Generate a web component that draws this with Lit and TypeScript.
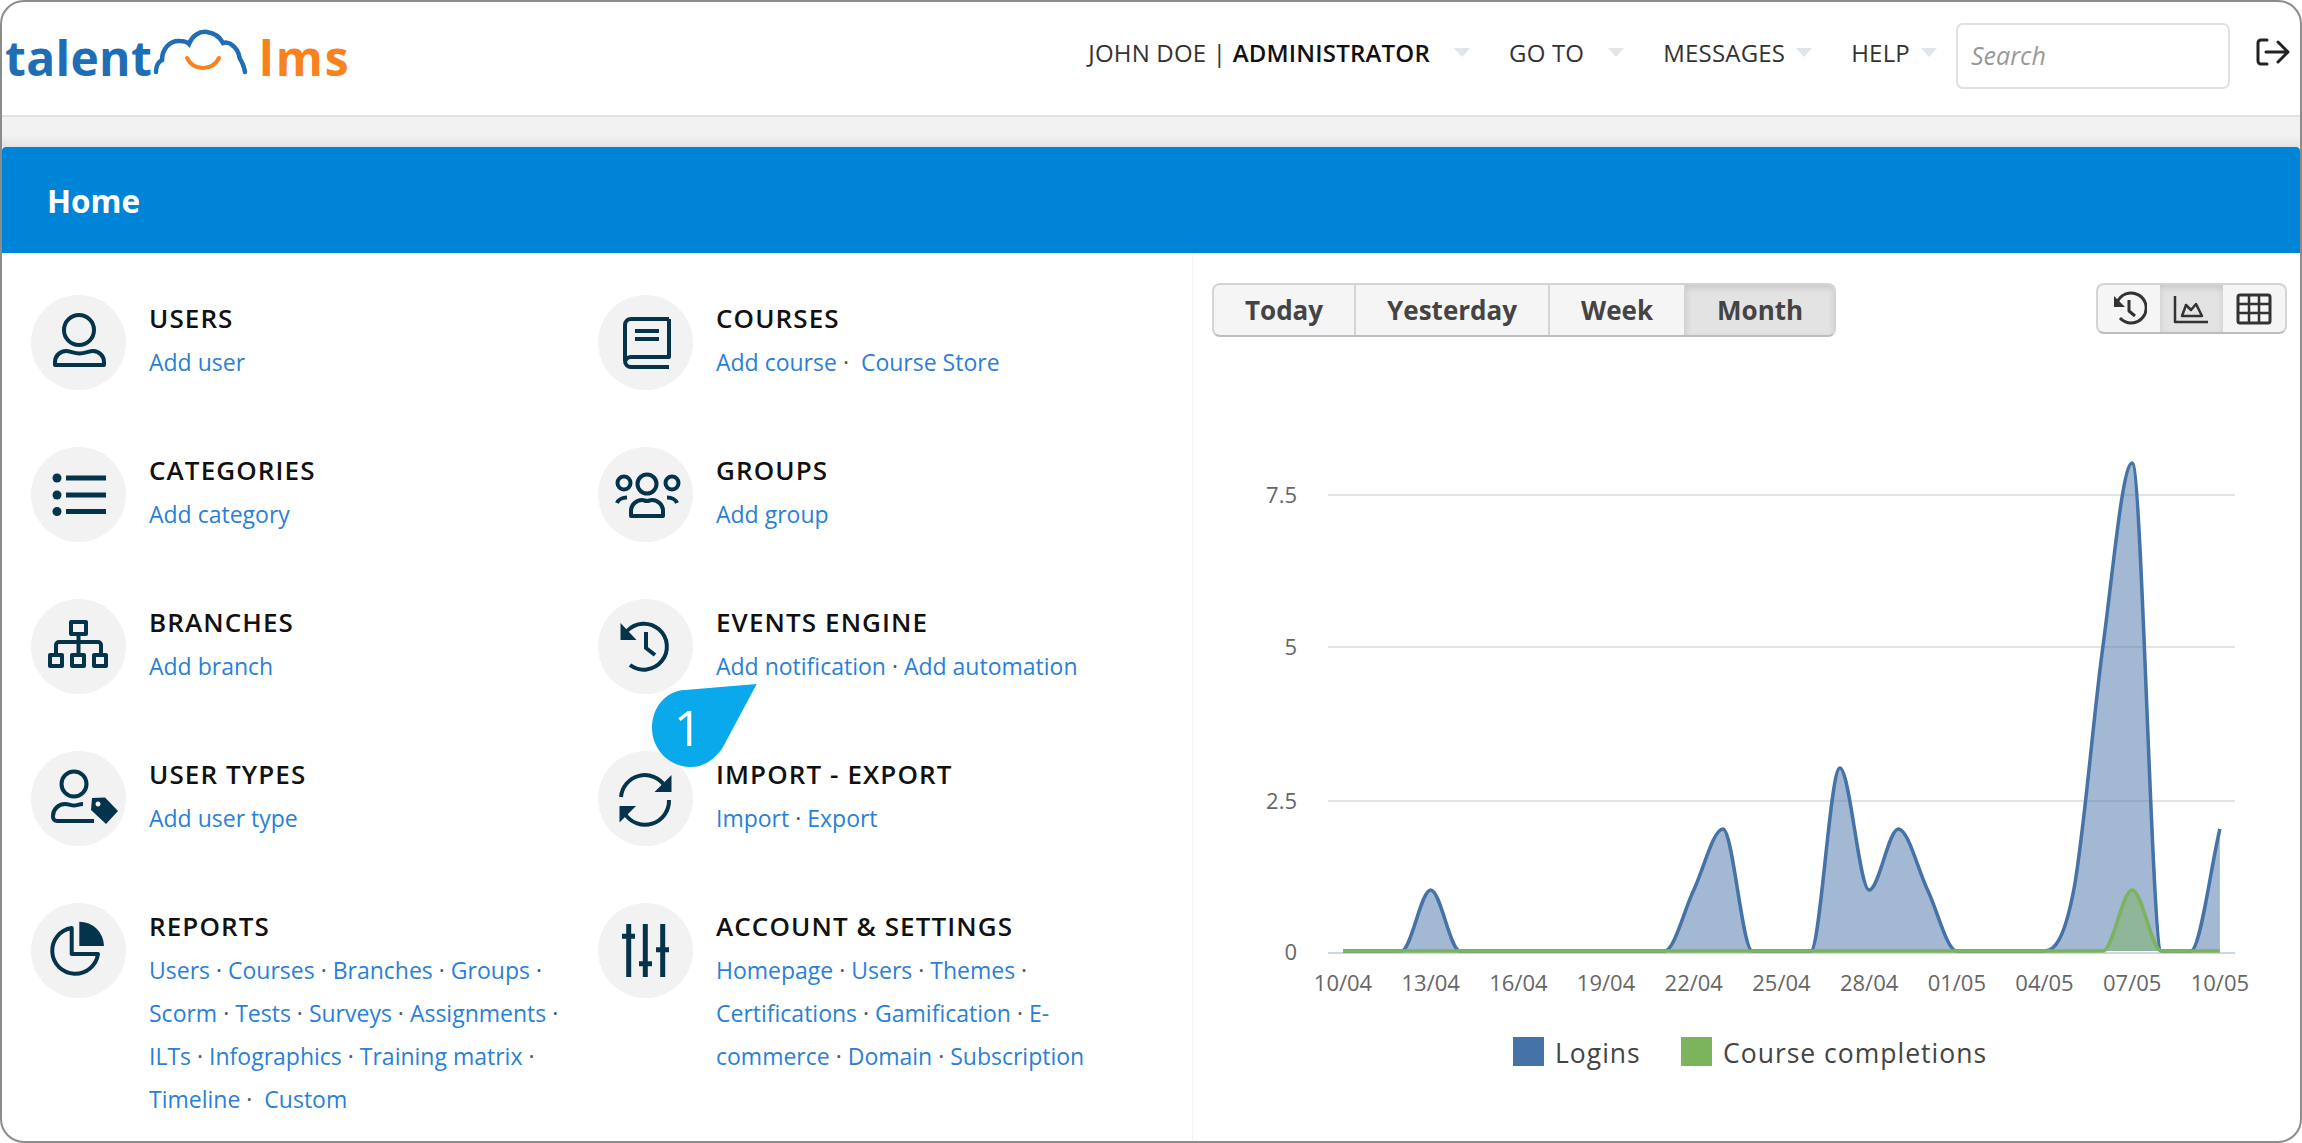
import { LitElement, css, html, svg, nothing } from "lit";
import { customElement } from "lit/decorators.js";
import { classMap } from "lit/directives/class-map.js";

const ICONS: Record<string, unknown> = {
	user: svg`<circle cx="48" cy="35" r="15"/><path d="M24 70v-3a11 11 0 0 1 11-11c4 0 8 2.5 13.5 2.5s9.500-2.500 13.500-2.500a11 11 0 0 1 11 11v3z"/>`,
	list: svg`<g class="fill"><circle cx="26" cy="31" r="4.500"/><circle cx="26" cy="48" r="4.500"/><circle cx="26" cy="64.500" r="4.500"/></g><path class="thick" d="M35 31h40M35 48h40M35 64.500h40"/>`,
	branch: svg`<rect x="40" y="23" width="15" height="12"/><path d="M47.500 35v20M25 54v-8a3 3 0 0 1 3-3h39a3 3 0 0 1 3 3v8"/><rect x="19" y="56" width="12" height="11"/><rect x="41" y="56" width="12" height="11"/><rect x="63" y="56" width="12" height="11"/>`,
	book: svg`<path d="M71 24H33a6 6 0 0 0-6 6v36a6 6 0 0 0 6 6h38M71 24v38H33a6 6 0 0 0-6 5M37 36h24M37 44h24"/>`,
	group: svg`<circle cx="49" cy="37" r="9.500"/><circle cx="26" cy="36" r="6.500"/><circle cx="74" cy="36" r="6.500"/><path d="M33 69v-5a11 11 0 0 1 11-11c2 0 3 1 5 1s3-1 5-1a11 11 0 0 1 11 11v5zM19 56c1-3 5-5.500 10-5.500M79 56c-1-3-5-5.500-10-5.500"/>`,
	history: svg`<path d="M29 32a23 23 0 1 1 3 34M48 33v16l9 7"/><path class="fill" d="M22.500 24v17h16z"/>`,
	usertag: svg`<circle cx="43" cy="33" r="12.500"/><path d="M63 70H26a4 4 0 0 1-4-4v-1a12 12 0 0 1 12-12c4 0 6 1.500 9 1.500s5-1.500 9-1.500"/><path class="fill" fill-rule="evenodd" d="M61 47l13-.500 13 13.500-12 13-15-14zM67 50.500a2.500 2.500 0 1 0 .01 0z"/>`,
	sync: svg`<path d="M23 46a24 24 0 0 1 44-11M71 49a24 24 0 0 1-44 14"/><path class="fill" d="M73.500 24v17H56.500zM21.500 55H38L21.500 71.500z"/>`,
	pie: svg`<path d="M40.700 25A23 23 0 1 0 67 51H40.700z"/><path class="fill" d="M48.300 18.700A24.500 24.500 0 0 1 73 43H48.300z"/>`,
	sliders: svg`<path class="thick" d="M30.700 21v53M47.300 21v53M64.700 21v53M24 33.300h13M41 60.700h13M58 46.700h13"/>`,
};

const SECTIONS = [
	{ icon: "user", title: "USERS", links: ["Add user"] },
	{ icon: "book", title: "COURSES", links: ["Add course", "Course Store"] },
	{ icon: "list", title: "CATEGORIES", links: ["Add category"] },
	{ icon: "group", title: "GROUPS", links: ["Add group"] },
	{ icon: "branch", title: "BRANCHES", links: ["Add branch"] },
	{ icon: "history", title: "EVENTS ENGINE", links: ["Add notification", "Add automation"] },
	{ icon: "usertag", title: "USER TYPES", links: ["Add user type"] },
	{ icon: "sync", title: "IMPORT - EXPORT", links: ["Import", "Export"] },
	{
		icon: "pie",
		title: "REPORTS",
		links: ["Users", "Courses", "Branches", "Groups", "Scorm", "Tests", "Surveys", "Assignments", "ILTs", "Infographics", "Training matrix", "Timeline", "Custom"],
	},
	{
		icon: "sliders",
		title: "ACCOUNT & SETTINGS",
		links: ["Homepage", "Users", "Themes", "Certifications", "Gamification", "E-commerce", "Domain", "Subscription"],
	},
];

// these two sit a little further from their separator
const WIDE_GAP = ["Course Store", "Custom"];

const RANGES = ["Today", "Yesterday", "Week", "Month"];

const LOGINS = [0, 0, 0, 1, 0, 0, 0, 0, 0, 0, 0, 0, 1, 2, 0, 0, 0, 3, 1, 2, 1, 0, 0, 0, 0, 1, 5, 8, 0, 0, 2];
const COMPLETIONS = LOGINS.map((_, i) => (i === 27 ? 1 : 0));
const TICKS = ["10/04", "13/04", "16/04", "19/04", "22/04", "25/04", "28/04", "01/05", "04/05", "07/05", "10/05"];

const X0 = 1343;
const DX = 29.23;
const Y0 = 951;
const UNIT = 61;

// flat at turning points, averaged slope elsewhere, so the curve never dips under zero
function curve(values: number[]): string {
	const px = (i: number) => X0 + i * DX;
	const py = (v: number) => Y0 - v * UNIT;
	const slopes = values.slice(1).map((v, i) => v - values[i]);
	const tan = values.map((_, i) => {
		const a = slopes[i - 1] ?? slopes[i];
		const b = slopes[i] ?? slopes[i - 1];
		return a * b <= 0 ? 0 : (a + b) / 2;
	});
	let d = `M${px(0)} ${py(values[0])}`;
	for (let i = 0; i < values.length - 1; i++) {
		const c1 = py(values[i]) - (tan[i] * UNIT) / 3;
		const c2 = py(values[i + 1]) + (tan[i + 1] * UNIT) / 3;
		d += `C${px(i) + DX / 3} ${c1} ${px(i + 1) - DX / 3} ${c2} ${px(i + 1)} ${py(values[i + 1])}`;
	}
	return d;
}

@customElement("app-root")
export class AppRoot extends LitElement {
	static override styles = css`
		:host {
			display: block;
			font-family: "Open Sans", sans-serif;
		}

		.frame {
			position: relative;
			box-sizing: border-box;
			width: 2302px;
			height: 1143px;
			border: 2px solid #8c8c8c;
			border-radius: 24px;
			overflow: hidden;
			background: #fff;
		}

		.topbar {
			box-sizing: border-box;
			height: 115px;
			display: flex;
			align-items: center;
			padding: 0 10px 5px 3px;
			border-bottom: 2px solid #dde3e6;
		}

		.logo {
			display: flex;
			align-items: baseline;
			margin-right: auto;
			font-size: 48px;
			font-weight: 700;
			letter-spacing: 0.3px;
			line-height: 60px;
			color: #1f6db5;
		}

		.logo svg {
			width: 108px;
			height: 52px;
			margin: 0 0 -4px -1px;
		}

		.logo .lms {
			letter-spacing: 2px;
			color: #f7821e;
		}

		.nav {
			display: flex;
			align-items: center;
			font-size: 24px;
			letter-spacing: 0.2px;
			color: #333;
			margin: 0 0 8px;
		}

		.nav strong {
			font-weight: 600;
			color: #111;
		}

		.nav-item {
			display: flex;
			align-items: center;
			margin-right: 39px;
			white-space: pre;
		}

		.nav-item:last-child {
			margin-right: 19px;
		}

		.caret {
			width: 0;
			height: 0;
			margin-left: 24px;
			border: solid transparent;
			border-width: 9px 8px 0;
			border-top-color: #dfe5e8;
		}

		.tight .caret {
			margin-left: 11px;
		}

		.search {
			box-sizing: border-box;
			width: 274px;
			height: 66px;
			padding: 0 13px 3px;
			border: 2px solid #dde3e6;
			border-radius: 7px;
			font: italic 25px "Open Sans", sans-serif;
			outline: none;
		}

		.search::placeholder {
			color: #999;
		}

		.logout {
			width: 36px;
			height: 30px;
			margin: 0 0 0 24px;
			fill: none;
			stroke: #222;
			stroke-width: 3;
			stroke-linecap: round;
			stroke-linejoin: round;
			transform: translateY(-4px);
		}

		.band {
			height: 30px;
			background: linear-gradient(#f2f2f2 60%, #e3e3e3);
		}

		.title-bar {
			box-sizing: border-box;
			height: 106px;
			padding-left: 45px;
			display: flex;
			align-items: center;
			background: #0084d8;
			border-radius: 4px 4px 0 0;
			font-size: 31.5px;
			font-weight: 700;
			color: #fff;
		}

		.content {
			display: flex;
		}

		.menu {
			box-sizing: border-box;
			width: 1191px;
			height: 888px;
			padding: 42px 0 0 29px;
			border-right: 1px solid #f3f3f3;
			display: grid;
			grid-template-columns: 567px 1fr;
			grid-auto-rows: 152px;
		}

		.section {
			display: flex;
			align-items: flex-start;
			gap: 23px;
		}

		.disc {
			flex: none;
			width: 95px;
			height: 95px;
			border-radius: 50%;
			background: #f2f2f2;
		}

		.disc svg {
			display: block;
			width: 95px;
			height: 95px;
			fill: none;
			stroke: #04334c;
			stroke-width: 4;
			stroke-linejoin: round;
		}

		.disc .fill {
			fill: #04334c;
			stroke: none;
		}

		.disc .thick {
			stroke-width: 5;
		}

		.text {
			width: 425px;
			margin-top: 2px;
			line-height: 43px;
		}

		.title {
			font-size: 26px;
			font-weight: 600;
			letter-spacing: 1.1px;
			color: #111;
		}

		.links {
			margin-top: 1px;
			font-size: 23px;
			color: #556;
		}

		.links a {
			color: #2b7fd6;
		}

		.links a.wide {
			margin-left: 6px;
		}

		.panel {
			flex: 1;
			min-width: 0;
		}

		.tools {
			display: flex;
			justify-content: space-between;
			align-items: flex-start;
			padding: 30px 13px 0 19px;
		}

		.btn-group {
			display: flex;
			border: 2px solid #d4d4d4;
			border-bottom-color: #bdbdbd;
			border-radius: 8px;
			overflow: hidden;
			background: #f5f5f5;
		}

		.range {
			height: 50px;
			padding: 0 31px;
			display: flex;
			align-items: center;
			border-left: 2px solid #d4d4d4;
			font-size: 26px;
			font-weight: 700;
			color: #444;
		}

		.range:first-child,
		.view:first-child {
			border-left: none;
		}

		.active {
			background: #e3e3e3;
			box-shadow: inset 0 3px 6px rgba(0, 0, 0, 0.12);
		}

		.view {
			box-sizing: border-box;
			width: 62.5px;
			height: 47px;
			display: flex;
			align-items: center;
			justify-content: center;
		}

		.view svg {
			width: 36px;
			height: 36px;
			fill: none;
			stroke: #333;
			stroke-width: 3;
			stroke-linejoin: round;
		}

		.view .solid {
			fill: #333;
			stroke: none;
		}

		.chart {
			display: block;
			width: 1109px;
			height: 806px;
		}

		.chart text {
			font-size: 22px;
			fill: #666;
		}

		.chart .legend {
			font-size: 26.5px;
			letter-spacing: 1px;
			fill: #444;
		}

		.badge {
			position: absolute;
			left: 648px;
			top: 680px;
			width: 110px;
			height: 90px;
		}

		.badge text {
			font-size: 49px;
			font-weight: 400;
			fill: #fff;
		}
	`;

	private renderLinks(links: string[]) {
		return links.map(
			(label, i) => html`${label.split(/(?<=-)/).map(
				(part) => html`<a class=${classMap({ wide: WIDE_GAP.includes(label) })}>${part}</a>`,
			)}${i < links.length - 1 ? html`&nbsp;· ` : nothing}`,
		);
	}

	private renderChart() {
		const blue = curve(LOGINS);
		const green = curve(COMPLETIONS);
		const close = `L${X0 + 30 * DX} ${Y0}L${X0} ${Y0}Z`;
		return html`<svg class="chart" viewBox="1193 337 1109 806">
			${[495, 647, 801].map((y) => svg`<line x1="1328" x2="2235" y1=${y} y2=${y} stroke="#e4e4e4" stroke-width="2"/>`)}
			<line x1="1328" x2="2235" y1="953" y2="953" stroke="#ccd6eb" stroke-width="2"/>
			<path d=${blue + close} fill="#4572a7" fill-opacity="0.5"/>
			<path d=${blue} fill="none" stroke="#4572a7" stroke-width="3.500"/>
			<path d=${green + close} fill="#7cb35d" fill-opacity="0.5"/>
			<path d=${green} fill="none" stroke="#7cb35d" stroke-width="3.500"/>
			${[["7.5", 503], ["5", 655], ["2.5", 809], ["0", 960]].map(
				([t, y]) => svg`<text x="1297" y=${y} text-anchor="end">${t}</text>`,
			)}
			${TICKS.map((t, i) => svg`<text x=${X0 + i * 3 * DX} y="991" text-anchor="middle">${t}</text>`)}
			<rect x="1513" y="1037" width="31" height="29" fill="#4572a7"/>
			<text class="legend" x="1555" y="1063">Logins</text>
			<rect x="1681" y="1037" width="31" height="29" fill="#7cb35d"/>
			<text class="legend" x="1723" y="1063">Course completions</text>
		</svg>`;
	}

	override render() {
		return html`<div class="frame">
			<header class="topbar">
				<div class="logo">
					<span>talent</span>
					<svg viewBox="0 0 108 52">
						<path d="M5 48c0-6 2-10 6-12 0-11 8-20 18-19 4 0 7 1 9 3 3-8 10-13 18-12 7 1 13 5 16 11 3-1 7 0 9 2 5 3 7 9 8 14 3 4 4 8 5 13" fill="none" stroke="#1f6db5" stroke-width="4.500" stroke-linecap="round"/>
						<path d="M36 34c3 6 8 10 16 10s13-4 16-10" fill="none" stroke="#f7821e" stroke-width="4" stroke-linecap="round"/>
					</svg>
					<span class="lms">lms</span>
				</div>
				<nav class="nav">
					<div class="nav-item"><span>JOHN DOE | <strong>ADMINISTRATOR</strong></span><i class="caret"></i></div>
					<div class="nav-item"><span>GO TO</span><i class="caret"></i></div>
					<div class="nav-item tight"><span>MESSAGES</span><i class="caret"></i></div>
					<div class="nav-item tight"><span>HELP</span><i class="caret"></i></div>
				</nav>
				<input class="search" placeholder="Search" />
				<svg class="logout" viewBox="0 0 36 30">
					<path d="M13 3H7a3 3 0 0 0-3 3v18a3 3 0 0 0 3 3h6M12 15h22M24 5l10 10-10 10"/>
				</svg>
			</header>
			<div class="band"></div>
			<div class="title-bar">Home</div>
			<div class="content">
				<div class="menu">
					${SECTIONS.map(
						(s) => html`<section class="section">
							<div class="disc"><svg viewBox="0 0 95 95">${ICONS[s.icon]}</svg></div>
							<div class="text">
								<div class="title">${s.title}</div>
								<div class="links">${this.renderLinks(s.links)}</div>
							</div>
						</section>`,
					)}
				</div>
				<div class="panel">
					<div class="tools">
						<div class="btn-group">
							${RANGES.map((r) => html`<div class=${classMap({ range: true, active: r === "Month" })}>${r}</div>`)}
						</div>
						<div class="btn-group">
							<div class="view">
								<svg viewBox="0 0 36 36">
									<path d="M6 12a15 15 0 1 1 3 15M18 9v11l6 5"/>
									<path class="solid" d="M3 5v11h11z"/>
								</svg>
							</div>
							<div class="view active">
								<svg viewBox="0 0 36 36">
									<path d="M2 5v26h33M9 25l4-11 5 5 5-6 6 12z" stroke-width="2.500"/>
								</svg>
							</div>
							<div class="view">
								<svg viewBox="0 0 36 36">
									<rect x="2" y="4" width="32" height="28" rx="2"/>
									<path d="M2 13h32M2 22h32M13 4v28M23 4v28" stroke-width="2.500"/>
								</svg>
							</div>
						</div>
					</div>
					${this.renderChart()}
				</div>
			</div>
			<svg class="badge" viewBox="0 0 110 90">
				<path d="M106.700 2L35 8C15 9 2 26 2 46c0 22 18 39 39 39 14 0 25-9 32-20z" fill="#0aa9ec"/>
				<text x="38" y="64" text-anchor="middle">1</text>
			</svg>
		</div>`;
	}
}

declare global {
	interface HTMLElementTagNameMap {
		"app-root": AppRoot;
	}
}
